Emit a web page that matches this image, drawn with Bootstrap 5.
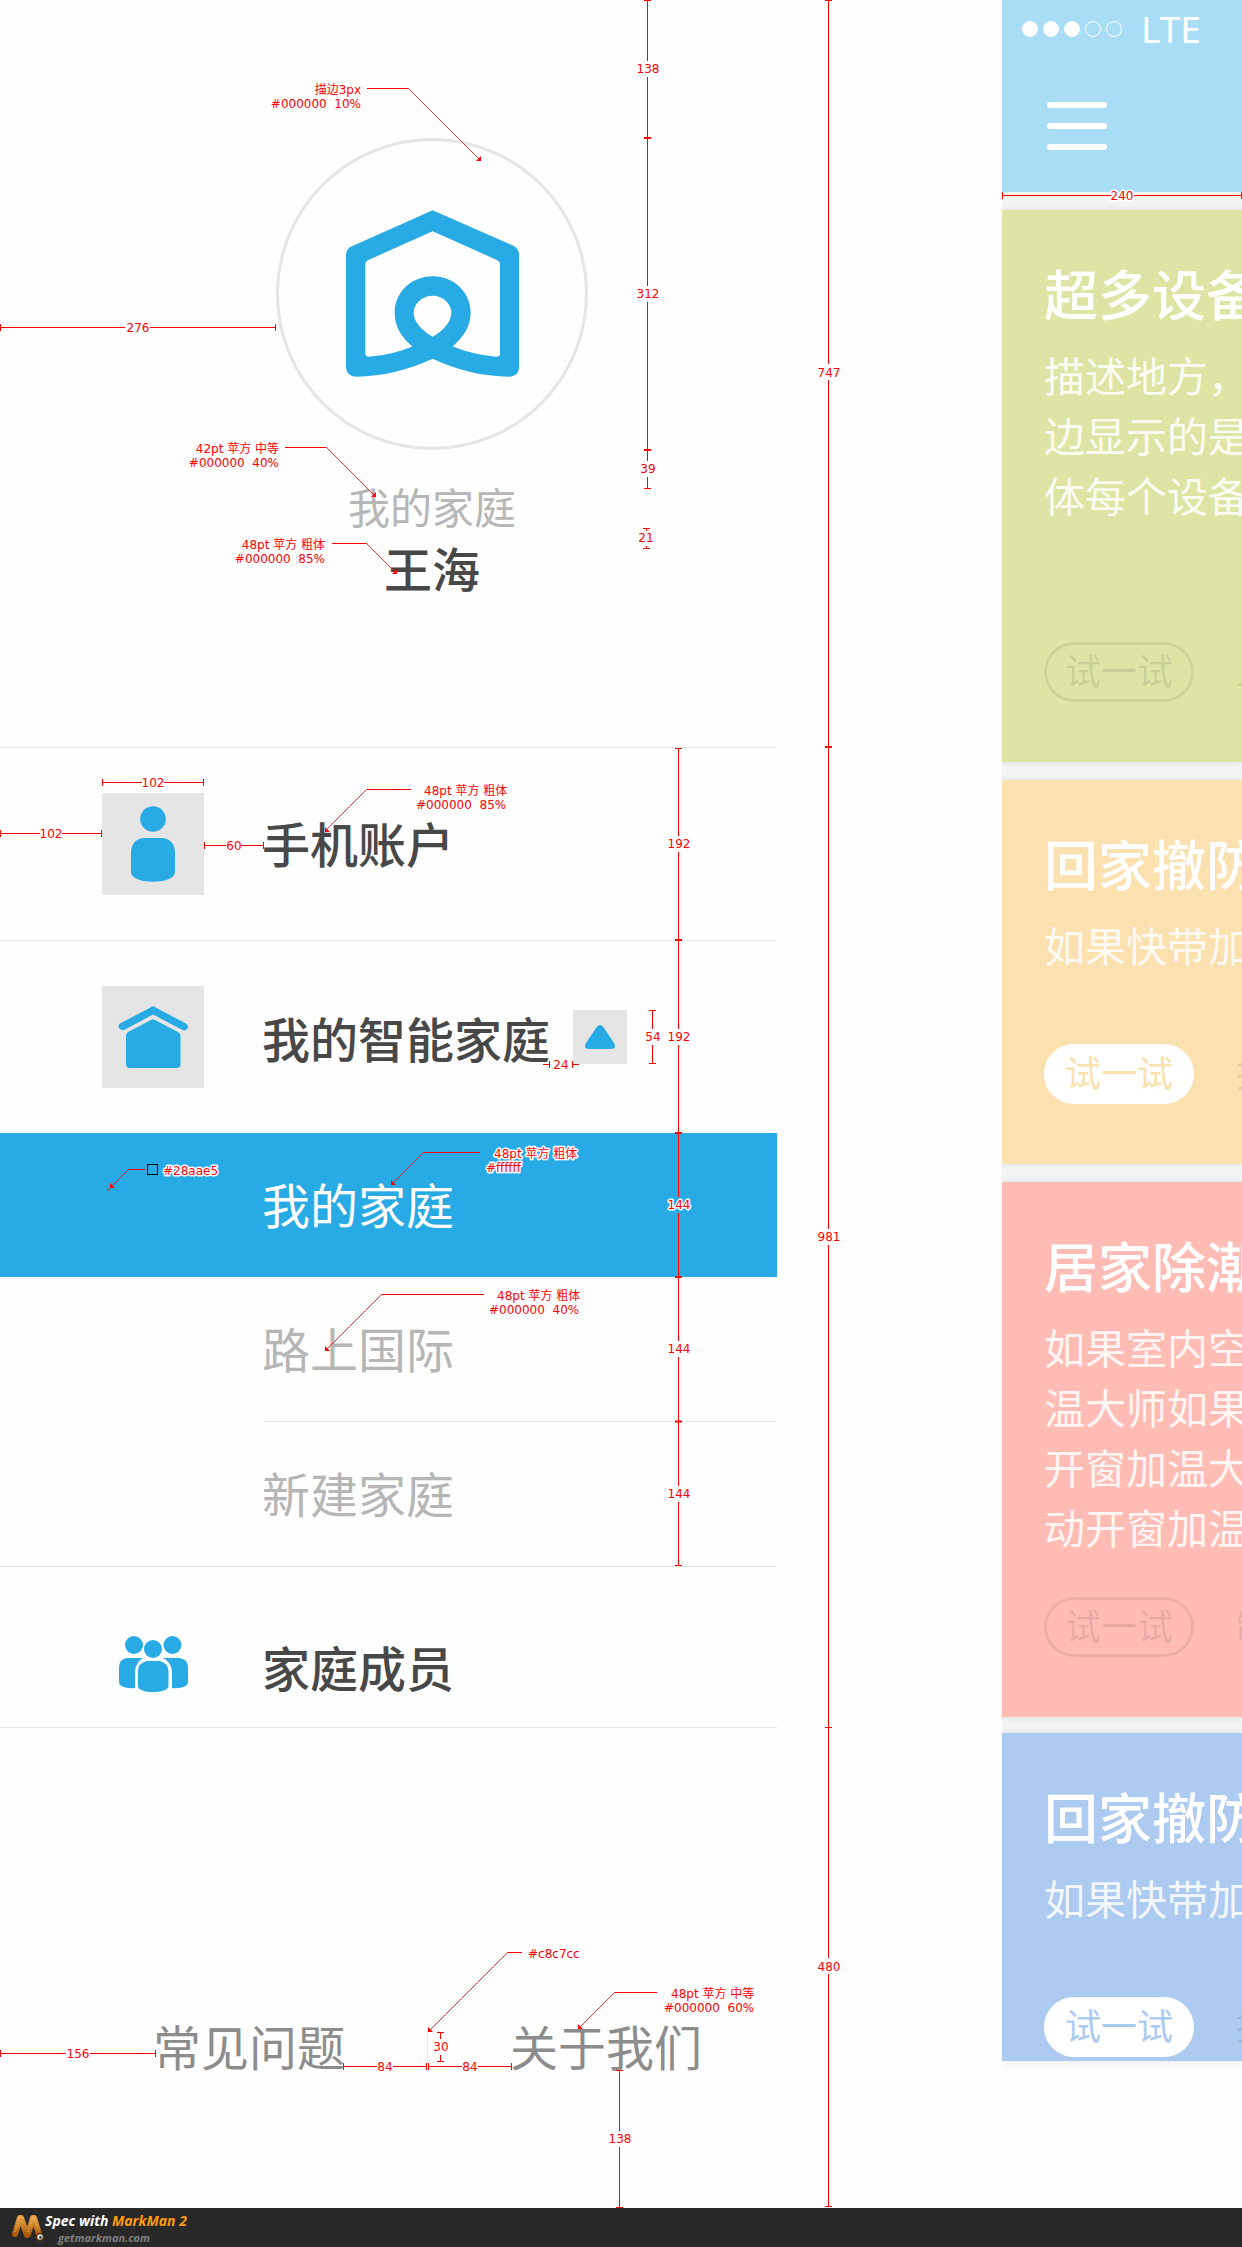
<!DOCTYPE html>
<html lang="zh-CN">
<head>
<meta charset="utf-8">
<meta name="viewport" content="width=device-width, initial-scale=1">
<title>我的家庭</title>
<link href="https://cdn.jsdelivr.net/npm/bootstrap@5.3.0/dist/css/bootstrap.min.css" rel="stylesheet">
<style>
  :root { --blue: #28aae5; --rule: #e5e5e5; }
  body { font-family: "Noto Sans CJK SC", sans-serif; background: #fefefe; }
  a { text-decoration: none; }
  .side-menu { flex: 0 1 777px; min-width: 0; }
  .profile { min-height: 748px; padding-top: 138px; border-bottom: 1px solid var(--rule); }
  .avatar { width: 312px; height: 312px; border: 3px solid var(--rule); margin: 0 0 25px 276px; padding-bottom: 1px; }
  .profile-text { margin-left: 87px; }
  .home-name { font-size: 42px; line-height: 62px; color: #b6b6b6; }
  .user-name { font-size: 48px; line-height: 60px; font-weight: 500; color: #484848; }
  .menu-row { min-height: 192px; padding-left: 102px; gap: 58px; font-size: 48px; line-height: 60px; font-weight: 500; color: #484848; }
  .menu-rule { border-bottom: 1px solid var(--rule); min-height: 193px; }
  .members { min-height: 162px; padding-top: 38px; }
  .icon-tile { width: 102px; height: 102px; }
  .tile-bg { background: #e5e5e5; }
  .toggle-btn { width: 54px; height: 54px; background: #e5e5e5; border: 0; padding: 0; margin-left: -35px; }
  .sub-link { min-height: 144px; padding: 0 0 5px 262px; font-size: 48px; line-height: 60px; color: #b6b6b6; }
  .sub-link.current { background: var(--blue); color: #fff; }
  .sub-rule { height: 1px; margin-left: 264px; background: var(--rule); }
  .help-links { gap: 82px; padding: 0 0 133px 153px; font-size: 48px; line-height: 60px; }
  .help-links a { color: #8c8c8c; }
  .help-links span { width: 1px; height: 30px; background: #e9e9eb; }
  .phone { flex: 0 0 240px; background: #fdfdfd; }
  .phone-bar { height: 192px; background: #a9ddf5; color: #fff; }
  .status { height: 57px; padding-left: 20px; gap: 5px; font: 400 37px "Noto Sans", sans-serif; }
  .status i { width: 16px; height: 16px; border: 1px solid #fff; border-radius: 50%; }
  .status i.on { background: #fff; }
  .status b { font-weight: 400; margin-left: 14px; line-height: 57px; }
  .menu-btn { margin: 45px 0 0 45px; padding: 0; border: 0; background: none; gap: 15px; width: 60px; }
  .menu-btn span { height: 6px; border-radius: 3px; background: #fff; }
  .feed { background: #f4f4f4; padding-top: 18px; gap: 18px; }
  .scene { padding: 53px 0 60px 42px; color: #fff; white-space: nowrap; overflow: hidden; box-shadow: 0 0 8px rgba(0,0,0,.1); min-height: 384px; }
  .scene h2 { font-size: 54px; line-height: 60px; font-weight: 500; margin-bottom: 21px; }
  .scene p { font-size: 41px; line-height: 60px; margin: 0; opacity: .85; }
  .scene-tall { min-height: 552px; }
  .scene-mid { min-height: 535px; }
  .scene-cut { min-height: 328px; padding-bottom: 4px; margin-top: -2px; }
  .lime { background: #dee5a4; }
  .amber { background: #fae1af; --ink: #fae1af; }
  .coral { background: #ffbcb4; }
  .sky { background: #adcaf0; --ink: #adcaf0; }
  .try-row { gap: 42px; font-size: 36px; color: rgba(0,0,0,.1); line-height: 54px; }
  .try-btn { flex: 0 0 150px; height: 60px; border-radius: 30px; border: 3px solid rgba(0,0,0,.07); background: none; color: rgba(0,0,0,.1); padding: 0 0 5px; line-height: 49px; }
  .try-btn.solid { background: #fff; border-color: #fff; color: var(--ink); }
  .brand-bar { height: 39px; background: #282828; padding-left: 11px; gap: 1px; font-family: "Open Sans", sans-serif; font-weight: 700; font-style: italic; }
  .brand-bar a { color: #fff; font-size: 14px; line-height: 19px; }
  .brand-bar em { color: #ff9a0d; }
  .brand-bar small { color: #808080; font-size: 11px; line-height: 15px; padding-left: 13px; }
  .spec { left: 0; top: 0; pointer-events: none; font: 12px "DejaVu Sans", "Noto Sans CJK SC", sans-serif; }
  .spec path { fill: none; stroke: red; }
  .spec text { fill: red; white-space: pre; }
  .spec .halo { stroke: #fff; stroke-width: 3px; paint-order: stroke; stroke-linejoin: round; }
  .spec .tip { fill: red; stroke: none; }
  .spec .slant { stroke-width: 1; stroke-opacity: .8; }
</style>
</head>
<body>
<div class="d-flex flex-column min-vh-100 position-relative">
  <div class="d-flex flex-grow-1">
    <nav class="side-menu d-flex flex-column" aria-label="侧边菜单">
      <header class="profile">
        <div class="avatar rounded-circle d-flex align-items-center justify-content-center">
          <svg width="173" height="167" viewBox="0 0 519 500" aria-hidden="true"><path fill="#28aae5" fill-rule="evenodd" d="M260 0 505 108Q519 116 519 133V473Q517 499 490 500Q370 498 260 446Q148 498 30 500Q3 499 0 473V133Q1 116 16 109ZM260 63 66 150Q58 153 58 161V430Q58 440 70 440Q140 434 199 409C165 380 146 348 146 308C146 248 194 198 260 198S374 248 374 308C374 348 353 380 320 409Q379 433 450 440Q462 440 462 430V161Q462 153 454 150ZM260 257C228 257 203 282 203 308C203 335 226 360 260 380C294 360 316 335 316 308C316 282 292 257 260 257Z"/></svg>
        </div>
        <div class="profile-text text-center">
          <div class="home-name">我的家庭</div>
          <div class="user-name">王海</div>
        </div>
      </header>
      <a href="#account" class="menu-row menu-rule d-flex align-items-center">
        <svg class="icon-tile tile-bg" viewBox="0 0 102 102" fill="#28aae5" aria-hidden="true"><circle cx="51" cy="26" r="12.8"/><path d="M43 45H59C69 45 73 52 73 60V79C73 92 29 92 29 79V60C29 52 33 45 43 45Z"/></svg>
        <span class="pb-1">手机账户</span>
      </a>
      <div class="menu-row d-flex align-items-center">
        <svg class="icon-tile tile-bg" viewBox="0 0 102 102" fill="#28aae5" aria-hidden="true"><path d="M48.500 21.500Q51 19 53.500 21.500L84 37.500Q88 41 84 44Q82 45 79.500 43.500L51 28.500 23 43.500Q20 45 18 43Q15 40 18 37.500Z"/><path d="M51 33 76 46Q78.500 47.500 78.500 50V78Q78.500 82 74.500 82H28Q24 82 24 78V50Q24 47.500 26 46Z"/></svg>
        <a href="#home" class="text-reset">我的智能家庭</a>
        <button class="toggle-btn d-flex align-items-center justify-content-center" type="button" aria-label="收起" aria-expanded="true"><svg width="30" height="24" viewBox="0 0 30 24" aria-hidden="true"><path fill="#28aae5" d="M11 3Q15-3 19 3L29 18Q32 24 26 24H4Q-2 24 1 18Z"/></svg></button>
      </div>
      <a href="#h1" class="sub-link current d-flex align-items-center" aria-current="true">我的家庭</a>
      <a href="#h2" class="sub-link d-flex align-items-center">路上国际</a>
      <div class="sub-rule"></div>
      <a href="#new" class="sub-link d-flex align-items-center">新建家庭</a>
      <a href="#members" class="menu-row menu-rule members d-flex align-items-center border-top">
        <svg class="icon-tile" viewBox="0 0 102 102" fill="#28aae5" aria-hidden="true"><g transform="translate(0 2)"><circle cx="32" cy="28" r="9"/><circle cx="70.500" cy="28" r="9"/><circle cx="51" cy="32" r="9"/><path d="M25 41H41Q34 45 33 54V71Q24 72 18 68Q17 67 17 64V50Q17 42 25 41ZM77 41H61Q69 45 70 54V71Q79 72 85 68Q86 67 86 64V50Q86 42 77 41ZM45 44H58Q66 46 66.500 54V69C66 77 36 77 36 69V54Q36 46 45 44Z"/></g></svg>
        <span>家庭成员</span>
      </a>
      <div class="help-links d-flex align-items-center mt-auto">
        <a href="#faq">常见问题</a><span></span><a href="#about">关于我们</a>
      </div>
    </nav>

    <section class="phone ms-auto overflow-hidden position-relative">
      <header class="phone-bar">
        <div class="status d-flex align-items-center"><i class="on"></i><i class="on"></i><i class="on"></i><i></i><i></i><b>LTE</b></div>
        <button class="menu-btn d-flex flex-column" type="button" aria-label="菜单"><span></span><span></span><span></span></button>
      </header>
      <div class="feed d-flex flex-column">
        <article class="scene scene-tall lime d-flex flex-column">
          <h2>超多设备</h2>
          <p>描述地方，<br>边显示的是<br>体每个设备</p>
          <div class="try-row d-flex mt-auto"><button class="try-btn" type="button">试一试</button><span>上</span></div>
        </article>
        <article class="scene amber d-flex flex-column">
          <h2>回家撤防</h2>
          <p>如果快带加</p>
          <div class="try-row d-flex mt-auto"><button class="try-btn solid" type="button">试一试</button><span>提</span></div>
        </article>
        <article class="scene scene-mid coral d-flex flex-column">
          <h2>居家除潮</h2>
          <p>如果室内空<br>温大师如果<br>开窗加温大<br>动开窗加温</p>
          <div class="try-row d-flex mt-auto"><button class="try-btn" type="button">试一试</button><span>制</span></div>
        </article>
        <article class="scene scene-cut sky d-flex flex-column">
          <h2>回家撤防</h2>
          <p>如果快带加</p>
          <div class="try-row d-flex mt-auto"><button class="try-btn solid" type="button">试一试</button><span>提</span></div>
        </article>
      </div>
      <svg class="spec position-absolute" width="240" height="210" aria-hidden="true">
        <path d="M0 195.500H109M132 195.500H240M.5 192V199M239.500 192V199"/>
        <text class="halo" x="120" y="200" text-anchor="middle">240</text>
      </svg>
    </section>
  </div>

  <footer class="brand-bar d-flex align-items-center">
    <svg width="33" height="28" viewBox="0 0 33 28" aria-hidden="true"><defs><linearGradient id="gold" x2="0" y2="1"><stop stop-color="#e8a043"/><stop offset="1" stop-color="#a85a08"/></linearGradient></defs><g fill="none" stroke="url(#gold)" stroke-width="6" stroke-linecap="round"><path d="M9 4 4 20M10 4 16 21M22 4 17 20M23 4 28 20"/></g><path stroke="#ffd28a" stroke-dasharray="1 2" d="M9 3 4 18M22 3 17 18M24 5 28 17"/><circle cx="29" cy="23" r="3.500" fill="#ddd" stroke="#5a3208" stroke-width="1.500"/><circle cx="29.500" cy="23.500" r="1.300" fill="#333"/></svg>
    <div class="d-flex flex-column"><a href="#markman">Spec with <em>MarkMan 2</em></a><small>getmarkman.com</small></div>
  </footer>

  <svg class="spec position-absolute" width="860" height="2208" viewBox="0 0 860 2208" aria-label="标注">
    <!-- vertical measures -->
    <path d="M647.500 0V61M647.500 77V286M647.500 302V461M647.500 477V489M644 .5H651M644 488.500H651M643 528.500H650M646.500 528V531M643 548.500H650M646.500 546V549"/>
    <path stroke-width="2" d="M644 138H651M644 450H651M825 747H832M675 940H682M675 1133H682M675 1277H682M675 1421.500H682"/>
    <path d="M828.500 0V364M828.500 380V1229M828.500 1245V1958M828.500 1974V2207M825 .5H832M825 1727.500H832M825 2206.500H832"/>
    <path d="M678.500 748V836M678.500 852V1029M678.500 1045V1197M678.500 1213V1341M678.500 1357V1486M678.500 1502V1565M675 748.500H682M675 1565.500H682"/>
    <path d="M652.500 1010V1029M652.500 1045V1064M649 1010.500H656M649 1063.500H656M440.500 2032V2039M440.500 2055V2062M437 2032.500H444M437 2061.500H444M619.500 2070V2131M619.500 2147V2208M616 2070.500H623M616 2207.500H623"/>
    <!-- horizontal measures -->
    <path d="M0 327.500H125M150 327.500H275M.5 324V331M275.500 324V331M102 782.500H142M164 782.500H204M102.500 779V786M203.500 779V786M0 833.500H40M62 833.500H101M.5 830V837M101.500 830V837M204 845.500H226M241 845.500H264M204.500 842V849M263.500 842V849"/>
    <path d="M543 1064.500H549M549.500 1061V1068M572.500 1061V1068M573 1064.500H579M0 2053.500H66M90 2053.500H155M.5 2050V2057M155.500 2050V2057M343 2066.500H377M393 2066.500H427M428 2066.500H462M478 2066.500H512M343.500 2063V2070M426.500 2063V2070M428.500 2063V2070M511.500 2063V2070"/>
    <!-- pointers -->
    <path d="M367 88.500H408.500M285 447.500H326.500M332 543.500H366.500M411 789.500H366.500M480 1152.500H423.500M484 1294.500H381.500M145 1169.500H128.500M522 1952.500H507.500M657 1992.500H614.500"/>
    <path class="slant" d="M408.500 88.500 480 160M326.500 447.500 375 496M366.500 543.500 396 573M366.500 789.500 325 831M423.500 1152.500 392 1184M381.500 1294.500 326 1350M128.500 1169.500 111 1187M507.500 1952.500 429 2031M614.500 1992.500 579 2028"/>
    <path class="tip" d="M481 161H476L481 156ZM376 497H371L376 492ZM397 574H392L397 569ZM325 832H330L325 827ZM391 1185H396L391 1180ZM325 1351H330L325 1346ZM110 1188H115L110 1183ZM428 2032H433L428 2027ZM578 2029H583L578 2024Z"/>
    <rect x="147.500" y="1164.500" width="10" height="10" fill="none" stroke="#000"/><rect x="107.500" y="1188.500" width="2" height="2" fill="none" stroke="#b5622d"/>
    <g text-anchor="middle">
      <text x="648" y="73">138</text><text x="648" y="298">312</text><text x="648" y="473">39</text><text x="646" y="542">21</text>
      <text x="829" y="377">747</text><text x="829" y="1241">981</text><text x="829" y="1971">480</text>
      <text x="679" y="848">192</text><text x="679" y="1041">192</text><text class="halo" x="679" y="1209">144</text><text x="679" y="1353">144</text><text x="679" y="1498">144</text>
      <text x="653" y="1041">54</text><text x="561" y="1069">24</text><text x="138" y="332">276</text><text x="153" y="787">102</text><text x="51" y="838">102</text><text x="234" y="850">60</text>
      <text x="78" y="2058">156</text><text x="385" y="2071">84</text><text x="470" y="2071">84</text><text x="441" y="2051">30</text><text x="620" y="2143">138</text>
    </g>
    <g text-anchor="end">
      <text x="361" y="94">描边3px</text><text x="361" y="108">#000000  10%</text>
      <text x="279" y="453">42pt 苹方 中等</text><text x="279" y="467">#000000  40%</text>
      <text x="325" y="549">48pt 苹方 粗体</text><text x="325" y="563">#000000  85%</text>
    </g>
    <text x="424" y="795">48pt 苹方 粗体</text><text x="416" y="809">#000000  85%</text>
    <g class="halo"><text x="494" y="1158">48pt 苹方 粗体</text><text x="486" y="1172">#ffffff</text><text x="163" y="1175">#28aae5</text></g>
    <text x="497" y="1300">48pt 苹方 粗体</text><text x="489" y="1314">#000000  40%</text>
    <text x="528" y="1958">#c8c7cc</text>
    <text x="671" y="1998">48pt 苹方 中等</text><text x="664" y="2012">#000000  60%</text>
  </svg>
</div>
<script src="https://cdn.jsdelivr.net/npm/bootstrap@5.3.0/dist/js/bootstrap.bundle.min.js"></script>
</body>
</html>
